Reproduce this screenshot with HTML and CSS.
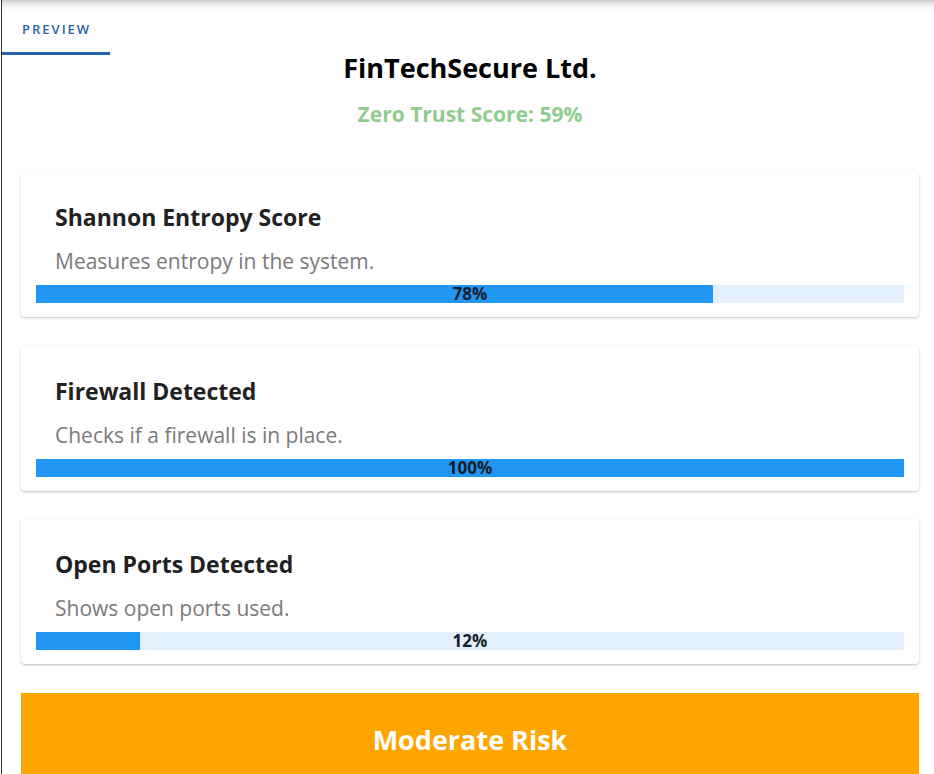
FILE: index.html
```html
<!DOCTYPE html>
<html>
<head>
<meta charset="utf-8">
<link rel="stylesheet" href="styles.css">
</head>
<body>
<div class="frame">
  <div class="tabs">
    <div class="tab">PREVIEW</div>
  </div>
  <div class="content">
    <h1 class="company">FinTechSecure Ltd.</h1>
    <div class="score">Zero Trust Score: 59%</div>
    <div class="card">
      <div class="card-title">Shannon Entropy Score</div>
      <div class="card-desc">Measures entropy in the system.</div>
      <div class="bar"><div class="fill" style="width:78%"></div><span class="bar-label">78%</span></div>
    </div>
    <div class="card">
      <div class="card-title">Firewall Detected</div>
      <div class="card-desc">Checks if a firewall is in place.</div>
      <div class="bar"><div class="fill" style="width:100%"></div><span class="bar-label">100%</span></div>
    </div>
    <div class="card">
      <div class="card-title">Open Ports Detected</div>
      <div class="card-desc">Shows open ports used.</div>
      <div class="bar"><div class="fill" style="width:12%"></div><span class="bar-label">12%</span></div>
    </div>
    <div class="risk">Moderate Risk</div>
  </div>
</div>
</body>
</html>
```
FILE: styles.css
```css
html, body {
  margin: 0;
  padding: 0;
  background: #fff;
  height: 100%;
  overflow: hidden;
}
body {
  font-family: "Open Sans", "Noto Sans", sans-serif;
  color: #1e1e1e;
}
.frame {
  height: 100%;
  border-left: 1px solid #333;
  margin-left: 1px;
  background: linear-gradient(to bottom, #c8c8c8 0, #e6e6e6 3px, #f7f7f7 7px, #fff 11px) no-repeat;
  background-size: 100% 12px;
  padding-top: 12px;
  box-sizing: border-box;
}
.tabs {
  display: flex;
}
.tab {
  width: 108px;
  box-sizing: border-box;
  padding: 8px 0 0 20px;
  height: 43px;
  font-size: 13px;
  font-weight: 600;
  letter-spacing: 2px;
  color: #2a63ad;
  border-bottom: 3px solid #2563b0;
}
.content {
  padding: 0 15px 0 19px;
  margin-top: -39px;
}
.company {
  margin: 0;
  text-align: center;
  font-size: 27px;
  font-weight: 700;
  color: #000;
  line-height: 36px;
  padding-top: 34px;
}
.score {
  text-align: center;
  font-size: 21px;
  font-weight: 700;
  color: #8fcd8f;
  line-height: 28px;
  margin-top: 14px;
  margin-bottom: 44px;
}
.card {
  background: #fff;
  border-radius: 4px;
  box-shadow: 0 1px 3px rgba(0,0,0,0.18), 0 1px 1px rgba(0,0,0,0.08);
  padding: 0 15px 14px 15px;
  height: 145px;
  box-sizing: border-box;
  margin-bottom: 28.5px;
}
.card-title {
  padding: 29px 0 0 19px;
  font-size: 23px;
  font-weight: 700;
  line-height: 32px;
  color: #212121;
}
.card-desc {
  padding: 13px 0 0 19px;
  font-size: 21px;
  line-height: 30px;
  color: #7a7a7a;
}
.bar {
  position: relative;
  height: 18px;
  background: #e3f0fc;
  margin-top: 9px;
}
.fill {
  height: 100%;
  background: #2196f3;
}
.bar-label {
  position: absolute;
  left: 0;
  right: 0;
  top: 0;
  text-align: center;
  font-size: 17px;
  font-weight: 700;
  line-height: 18px;
  color: #15202b;
}
.risk {
  background: #ffa500;
  color: #fff;
  text-align: center;
  font-size: 27px;
  font-weight: 700;
  line-height: 36px;
  height: 100px;
  padding-top: 29px;
  box-sizing: border-box;
}
```
